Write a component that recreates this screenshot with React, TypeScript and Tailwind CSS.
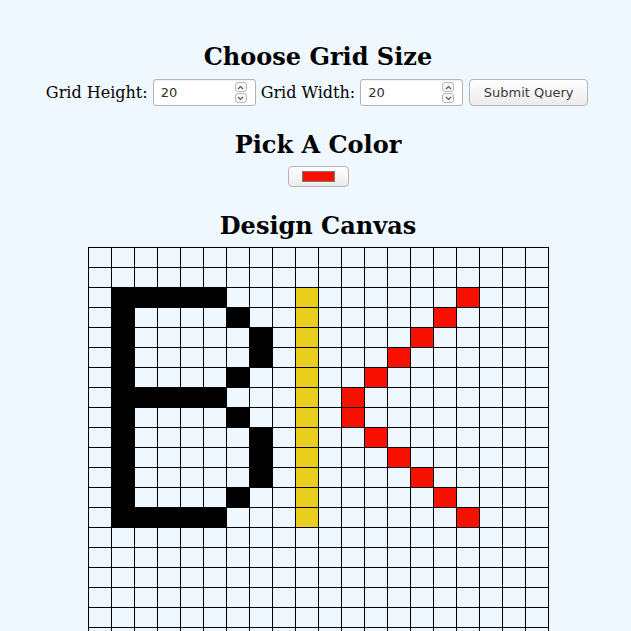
import React from "react";

const BLACK = "#000000";
const YELLOW = "#e9cf1c";
const RED = "#f70f00";

function buildColors(): Record<string, string> {
  const m: Record<string, string> = {};
  const set = (r: number, c: number, col: string) => {
    m[`${r}-${c}`] = col;
  };
  // B
  for (let c = 1; c <= 5; c++) {
    set(2, c, BLACK);
    set(7, c, BLACK);
    set(13, c, BLACK);
  }
  for (let r = 2; r <= 13; r++) set(r, 1, BLACK);
  [3, 6, 8, 12].forEach((r) => set(r, 6, BLACK));
  [4, 5, 9, 10, 11].forEach((r) => set(r, 7, BLACK));
  // I
  for (let r = 2; r <= 13; r++) set(r, 9, YELLOW);
  // <
  const red: [number, number][] = [
    [2, 16],
    [3, 15],
    [4, 14],
    [5, 13],
    [6, 12],
    [7, 11],
    [8, 11],
    [9, 12],
    [10, 13],
    [11, 14],
    [12, 15],
    [13, 16],
  ];
  red.forEach(([r, c]) => set(r, c, RED));
  return m;
}

const colors = buildColors();

function Chevron({ up }: { up: boolean }) {
  return (
    <svg width="7" height="5" viewBox="0 0 7 5" className="block">
      <path
        d={up ? "M1 4 L3.5 1.5 L6 4" : "M1 1 L3.5 3.5 L6 1"}
        fill="none"
        stroke="#555"
        strokeWidth="1.1"
      />
    </svg>
  );
}

function NumberBox() {
  return (
    <div className="relative flex h-[27px] w-[103px] items-center rounded-[3px] border border-[#b4b4b4] bg-white pl-[7px] shadow-[inset_0_1px_1px_rgba(0,0,0,0.06)]">
      <span className="text-[13px] leading-none text-[#2e2e2e] [font-family:'DejaVu_Sans',sans-serif]">
        20
      </span>
      <div className="absolute right-[8px] top-[2px] flex flex-col gap-[1px]">
        <div className="flex h-[10px] w-[12px] items-center justify-center rounded-[3px] border border-[#b8b8b8] bg-[#f6f6f6]">
          <Chevron up />
        </div>
        <div className="flex h-[10px] w-[12px] items-center justify-center rounded-[3px] border border-[#b8b8b8] bg-[#f6f6f6]">
          <Chevron up={false} />
        </div>
      </div>
    </div>
  );
}

export default function App() {
  const rows = Array.from({ length: 20 }, (_, i) => i);
  const cols = Array.from({ length: 20 }, (_, i) => i);
  return (
    <div className="min-h-[631px] bg-[#f0f8ff] pl-[5px] pt-[43px] text-center text-black [font-family:'DejaVu_Serif',serif]">
      <h2 className="h-[28px] text-[24px] font-bold leading-[28px]">Choose Grid Size</h2>
      <div className="-ml-[2px] mt-[8px] flex h-[27px] items-center justify-center">
        <span className="text-[16px] leading-none">Grid Height:</span>
        <div className="ml-[5px]">
          <NumberBox />
        </div>
        <span className="ml-[5px] text-[16px] leading-none">Grid Width:</span>
        <div className="ml-[5px]">
          <NumberBox />
        </div>
        <button className="ml-[6px] flex h-[27px] w-[119px] items-center justify-center rounded-[4px] border border-[#b5b5b5] bg-gradient-to-b from-[#ffffff] to-[#ebebeb] text-[13px] text-[#3a3a3a] [font-family:'DejaVu_Sans',sans-serif]">
          Submit Query
        </button>
      </div>
      <h2 className="mt-[25px] h-[28px] text-[24px] font-bold leading-[28px]">Pick A Color</h2>
      <div className="mt-[7px] flex justify-center">
        <div className="flex h-[21px] w-[61px] items-center justify-center rounded-[4px] border border-[#b5b5b5] bg-gradient-to-b from-[#ffffff] to-[#ebebeb]">
          <div className="h-[11px] w-[33px] border border-[#7a7a7a] bg-[#f70f00]" />
        </div>
      </div>
      <h2 className="mt-[25px] h-[28px] text-[24px] font-bold leading-[28px]">Design Canvas</h2>
      <div className="mt-[7px] flex justify-center">
        <div className="grid grid-cols-[repeat(20,23px)] border-l border-t border-black">
          {rows.map((r) =>
            cols.map((c) => {
              const col = colors[`${r}-${c}`];
              return (
                <div
                  key={`${r}-${c}`}
                  className="h-[20px] w-[23px] border-b border-r border-black"
                  style={col ? { backgroundColor: col } : undefined}
                />
              );
            })
          )}
        </div>
      </div>
    </div>
  );
}
